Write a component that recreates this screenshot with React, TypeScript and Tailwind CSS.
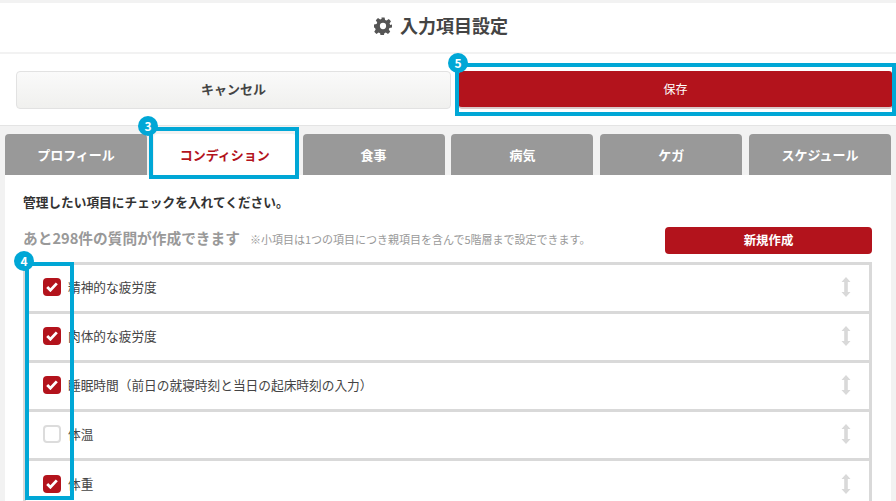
import React from "react";

const tabs = ["プロフィール", "コンディション", "食事", "病気", "ケガ", "スケジュール"];
const rows: [string, boolean][] = [
  ["精神的な疲労度", true],
  ["肉体的な疲労度", true],
  ["睡眠時間（前日の就寝時刻と当日の起床時刻の入力）", true],
  ["体温", false],
  ["体重", true],
];

function Gear() {
  return (
    <svg width="18" height="18" viewBox="0.5 0.5 23 23" fill="#555">
      <path
        fillRule="evenodd"
        d="M10 1h4l.7 3.2 1.900.8 2.800-1.800 2.800 2.800-1.800 2.800.8 1.900L23.500 10v4l-3.300.7-.8 1.900 1.800 2.800-2.800 2.800-2.800-1.800-1.900.8-.7 3.300h-4l-.7-3.300-1.900-.8-2.800 1.800-2.800-2.800 1.800-2.800-.8-1.900L.5 14v-4l3.300-.7.8-1.900-1.800-2.800 2.800-2.800 2.800 1.800 1.900-.8zM12 8a4 4 0 100 8 4 4 0 000-8z"
      />
    </svg>
  );
}

function Badge({ n, pos }: { n: number; pos: string }) {
  return (
    <span className={"absolute flex h-[20px] w-[20px] items-center justify-center rounded-full bg-[#00a7d6] text-[12px] font-bold leading-none text-white " + pos}>
      {n}
    </span>
  );
}

function Handle() {
  return (
    <svg width="10" height="20" viewBox="0 0 10 20" fill="#d9d9d9">
      <path d="M5 0l4.500 5H6.800v10H9.500L5 20 .5 15h2.700V5H.5z" />
    </svg>
  );
}

export default function App() {
  return (
    <div
      className="relative h-[501px] w-[896px] overflow-hidden bg-[#f2f2f2] pt-[3px] text-[#333]"
      style={{ fontFamily: '"Noto Sans CJK JP", "Noto Sans", sans-serif' }}
    >
      <header className="flex h-[49px] items-center justify-center gap-[8px] bg-white pb-[4px] pr-[14px] text-[18px] font-bold text-[#444]">
        <Gear />
        <span>入力項目設定</span>
      </header>
      <div className="mt-[2px] flex h-[72px] gap-[8px] border-b border-[#e4e4e4] bg-white pl-[16px] pr-[4px] pt-[17px]">
        <button className="h-[38px] w-[435px] rounded-[4px] border border-[#e2e2e2] bg-gradient-to-b from-[#fafafa] to-[#f0f0ee] pb-[2px] text-[13px] font-bold text-[#444]">
          キャンセル
        </button>
        <button className="h-[38px] w-[433px] rounded-[3px] border-b-2 border-[#d9c9c9] bg-[#b3131c] text-[12px] text-white">
          保存
        </button>
      </div>
      <nav className="mt-[8px] flex h-[41px] gap-[6.800px] px-[5px]">
        {tabs.map((t, i) => (
          <div
            key={t}
            className={
              i === 1
                ? "flex h-[41px] flex-1 items-center justify-center rounded-t-[4px] bg-white text-[13px] font-bold text-[#b3131c]"
                : "flex h-[41px] flex-1 items-center justify-center rounded-t-[4px] bg-[#999] text-[13px] font-bold text-white"
            }
          >
            {t}
          </div>
        ))}
      </nav>
      <main className="mx-[5px] h-[330px] bg-white pl-[18px] pr-[19px]">
        <p className="pt-[18px] text-[12.700px] font-bold leading-[18px]">
          管理したい項目にチェックを入れてください。
        </p>
        <div className="mt-[16px] flex h-[27px] items-center">
          <span className="pb-[6px] text-[14.700px] font-bold leading-[27px] text-[#999]">
            あと298件の質問が作成できます
          </span>
          <span className="ml-[10px] pb-[2px] text-[11px] text-[#999]">
            ※小項目は1つの項目につき親項目を含んで5階層まで設定できます。
          </span>
          <button className="ml-auto h-[27px] w-[207px] rounded-[4px] bg-[#b3131c] text-[12.400px] font-bold text-white">
            新規作成
          </button>
        </div>
        <ul className="mt-[8px] border-x-[3px] border-t-[3px] border-[#d9d9d9]">
          {rows.map(([label, on]) => (
            <li
              key={label}
              className="flex h-[49px] items-center border-b-[3px] border-[#d9d9d9] pb-[3px] pl-[17px] pr-[18px] last:border-b-0"
            >
              {on ? (
                <span className="flex h-[18px] w-[18px] items-center justify-center rounded-[4px] bg-[#b3131c]">
                  <svg width="12" height="10" viewBox="0 0 12 10" fill="none" stroke="white" strokeWidth="2.800">
                    <path d="M1.200 5l3.200 3.200L10.800 1.400" />
                  </svg>
                </span>
              ) : (
                <span className="h-[18px] w-[18px] rounded-[4px] border-2 border-[#dcdcdc] bg-white" />
              )}
              <span className="ml-[7px] text-[12.700px] text-[#444]">{label}</span>
              <span className="ml-auto flex">
                <Handle />
              </span>
            </li>
          ))}
        </ul>
      </main>

      <div className="absolute left-[149px] top-[127px] h-[52px] w-[150px] border-4 border-[#00a7d6]">
        <Badge n={3} pos="-left-[15px] -top-[15px]" />
      </div>
      <div className="absolute left-[25px] top-[262px] h-[238px] w-[49px] border-4 border-[#00a7d6]">
        <Badge n={4} pos="-left-[15px] -top-[15px]" />
      </div>
      <div className="absolute left-[455px] top-[63px] h-[53px] w-[441px] border-4 border-[#00a7d6]">
        <Badge n={5} pos="-left-[11px] -top-[14px]" />
      </div>
    </div>
  );
}
